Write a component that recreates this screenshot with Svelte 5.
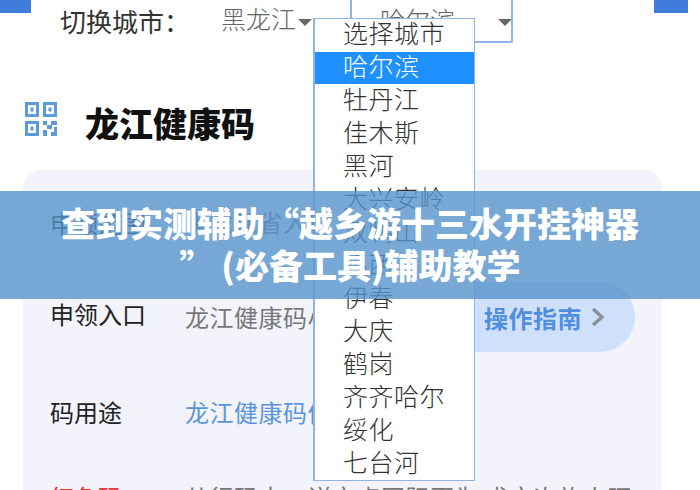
<script>
  const cities = ['选择城市', '哈尔滨', '牡丹江', '佳木斯', '黑河', '大兴安岭', '双鸭山', '鸡西', '伊春', '大庆', '鹤岗', '齐齐哈尔', '绥化', '七台河'];
  const selected = '哈尔滨';
</script>

<div class="page">
  <div class="tabs">
    <span class="tab"></span>
    <span class="tab right"></span>
  </div>

  <div class="switcher">
    <span class="switch-label">切换城市：</span>
    <span class="select province">黑龙江<i class="caret"></i></span>
    <span class="select city">哈尔滨<i class="caret"></i></span>
  </div>

  <h1 class="title">
    <svg class="qr" viewBox="0 0 32 34" width="32" height="34" fill="#5b9bd9">
      <path fill-rule="evenodd" d="M0 0h14v15H0zM3 3v9h8V3zM18 0h14v15H18zM21 3v9h8V3zM0 19h14v15H0zM3 22v9h8v-9z" />
      <rect x="5.500" y="5.500" width="3" height="4" />
      <rect x="23.500" y="5.500" width="3" height="4" />
      <rect x="5.500" y="24.500" width="3" height="4" />
      <path d="M18 19h4v4h-4zM26 19h6v4h-6zM22 23h5v4h-5zM29 25h3v5h-3zM18 28h4v6h-4zM26 30h6v4h-6z" />
    </svg>
    <span>龙江健康码</span>
  </h1>

  <div class="card">
    <div class="row first">
      <span class="key">申领范围</span>
      <span class="value">黑龙江省入境人员</span>
    </div>
    <div class="row entry">
      <span class="key">申领入口</span>
      <span class="value">龙江健康码小程序</span>
      <span class="guide">
        <svg viewBox="0 0 20 20" width="20" height="20"><circle cx="10" cy="10" r="8" fill="none" stroke="#8a9ab8" stroke-width="2" /></svg>
        <span class="guide-text">操作指南</span>
        <svg class="chevron" viewBox="0 0 14 20" width="14" height="20"><path d="M2 2l9 8-9 8" fill="none" stroke="#8a8f98" stroke-width="3.500" /></svg>
      </span>
    </div>
    <div class="row use">
      <span class="key">码用途</span>
      <span class="value link">龙江健康码信息查询</span>
    </div>
    <div class="row last">
      <span class="key red">红色码</span>
      <span class="value">从行码本，详市点国际页为 求市次旅人旺</span>
    </div>
  </div>

  <ul class="dropdown">
    {#each cities as city}
      <li class:active={city === selected}>{city}</li>
    {/each}
  </ul>

  <div class="banner">查到实测辅助“越乡游十三水开挂神器<br />” (必备工具)辅助教学</div>
</div>

<style>
  :global(body) {
    margin: 0;
    background: #fff;
  }

  .page {
    position: relative;
    width: 700px;
    height: 490px;
    overflow: hidden;
    font-family: "Noto Sans CJK SC", "Liberation Sans", sans-serif;
    color: #222;
  }

  .tabs {
    display: flex;
    justify-content: space-between;
    padding-right: 12px;
    height: 13px;
  }

  .tab {
    width: 31px;
    height: 13px;
    background: #3f7bdb;
  }

  .tab.right {
    width: 34px;
  }

  .switcher {
    display: flex;
    align-items: flex-start;
    height: 43px;
    margin-top: -13px;
    padding-left: 60px;
  }

  .switch-label {
    width: 161px;
    font-size: 26px;
    line-height: 42px;
    color: #333;
  }

  .select {
    position: relative;
    color: #666;
    white-space: nowrap;
    font-size: 25px;
    font-weight: 300;
  }

  .province {
    width: 129px;
    line-height: 36px;
  }

  .city {
    width: 163px;
    height: 43px;
    padding-left: 28px;
    box-sizing: border-box;
    border: 2px solid #8fb4ea;
    border-top: 0;
    border-radius: 0 0 2px 2px;
    line-height: 38px;
    overflow: hidden;
  }

  .caret {
    position: absolute;
    top: 19px;
    left: 77px;
    width: 0;
    height: 0;
    border: 7px solid transparent;
    border-top: 7px solid #666;
    border-bottom: 0;
  }

  .city .caret {
    left: auto;
    right: -1px;
  }

  .title {
    display: flex;
    align-items: flex-start;
    gap: 28px;
    margin: 59px 0 0 25px;
    font-size: 34px;
    line-height: 41px;
    color: #111;
    font-weight: 900;
  }

  .card {
    margin: 27px 38px 0 23px;
    padding: 0 27px;
    background: #f2f3fb;
    border-radius: 18px;
    height: 340px;
  }

  .row {
    position: relative;
    display: flex;
    font-size: 24px;
    white-space: nowrap;
  }

  .key {
    display: flex;
    align-items: center;
    width: 135px;
    flex-shrink: 0;
    color: #222;
  }

  .key.red {
    color: #e8333a;
  }

  .value {
    display: flex;
    align-items: center;
    flex: 1;
    min-width: 0;
    letter-spacing: 0.5px;
    color: #777;
    border-bottom: 1px solid #eef0f7;
  }

  .value.link {
    color: #5b95dc;
  }

  .first {
    height: 88px;
    padding-top: 16px;
    box-sizing: border-box;
  }

  .entry {
    height: 113px;
  }

  .entry .key {
    padding-bottom: 2px;
  }

  .entry .value {
    padding-top: 5px;
    box-sizing: border-box;
  }

  .use {
    height: 84px;
  }

  .use .key,
  .use .value {
    padding-bottom: 3px;
    box-sizing: border-box;
  }

  .last {
    height: 80px;
    padding-top: 27px;
    box-sizing: border-box;
    align-items: flex-start;
  }

  .last .key,
  .last .value {
    line-height: 30px;
    border: 0;
  }

  .guide {
    position: absolute;
    right: 0;
    top: 24px;
    width: 240px;
    height: 70px;
    padding-right: 30px;
    box-sizing: border-box;
    display: flex;
    align-items: center;
    justify-content: flex-end;
    gap: 8px;
    background: #cfe0fb;
    border-radius: 35px;
    color: #4f8fdf;
    font-weight: 700;
  }

  .guide-text {
    letter-spacing: 0.5px;
  }

  .chevron {
    margin-left: 1px;
  }

  .dropdown {
    position: absolute;
    left: 313px;
    top: 18px;
    width: 162px;
    height: 463px;
    margin: 0;
    padding: 0;
    box-sizing: border-box;
    list-style: none;
    background: #fff;
    border: 1px solid #8fb4ea;
    border-left-width: 2px;
    font-size: 25px;
    font-weight: 300;
    color: #333;
  }

  .dropdown li {
    height: 33px;
    line-height: 26px;
    padding-left: 28px;
    letter-spacing: 0.5px;
    white-space: nowrap;
  }

  .dropdown li.active {
    height: 32px;
    margin-bottom: 1px;
    background: #1e90ff;
    color: #fff;
  }

  .banner {
    position: absolute;
    left: 0;
    right: 0;
    top: 191px;
    height: 108px;
    padding-top: 11px;
    box-sizing: border-box;
    background: rgba(86, 147, 204, 0.8);
    color: #fff;
    font-size: 34px;
    line-height: 42px;
    font-weight: 900;
    text-align: center;
    white-space: nowrap;
  }
</style>
